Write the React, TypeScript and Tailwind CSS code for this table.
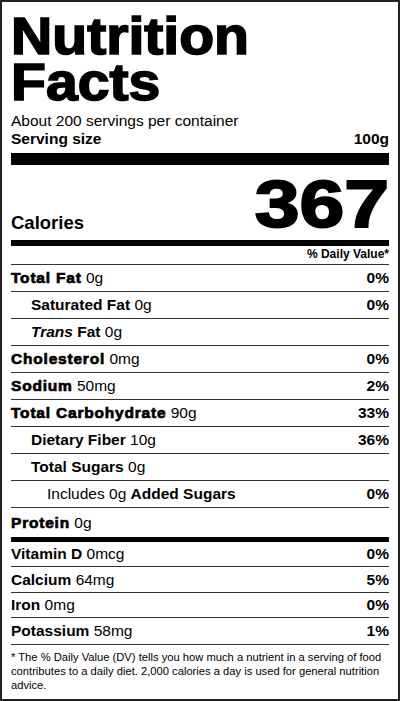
import React from "react";

type Nutrient = {
  label: string;
  amount: string;
  dv?: string;
  heavy?: boolean;
  indent?: boolean;
  italicPrefix?: string;
};

const rows: Nutrient[] = [
  { label: "Total Fat", amount: "0g", dv: "0%", heavy: true },
  { label: "Saturated Fat", amount: "0g", dv: "0%", indent: true },
  { label: "Fat", italicPrefix: "Trans", amount: "0g", indent: true },
  { label: "Cholesterol", amount: "0mg", dv: "0%", heavy: true },
  { label: "Sodium", amount: "50mg", dv: "2%", heavy: true },
  { label: "Total Carbohydrate", amount: "90g", dv: "33%", heavy: true },
  { label: "Dietary Fiber", amount: "10g", dv: "36%", indent: true },
  { label: "Total Sugars", amount: "0g", indent: true },
];

// row heights taken from the label's ruling
const vitamins = [
  { label: "Vitamin D", amount: "0mcg", dv: "0%", h: "h-[25px]" },
  { label: "Calcium", amount: "64mg", dv: "5%", h: "h-[26px]" },
  { label: "Iron", amount: "0mg", dv: "0%", h: "h-[25px]" },
  { label: "Potassium", amount: "58mg", dv: "1%", h: "h-[27px]" },
];

const heavyCls = "font-bold tracking-[0.8px] [-webkit-text-stroke:0.7px_black]";

const Row = ({ item }: { item: Nutrient }) => (
  <div className="flex justify-between items-center h-[27px] border-b border-[#333]">
    <span className={item.indent ? "pl-5" : ""}>
      {item.italicPrefix && <i className="font-bold">{item.italicPrefix} </i>}
      <span className={item.heavy ? heavyCls : "font-bold"}>{item.label}</span>{" "}
      {item.amount}
    </span>
    {item.dv && <span className="font-bold">{item.dv}</span>}
  </div>
);

const App = () => {
  return (
    <div className="w-[400px] h-[701px] overflow-hidden border-2 border-[#222] bg-white px-[9px] text-black text-[15.5px] font-['Liberation_Sans',Arial,sans-serif]">
      {/* Header */}
      <h1 className="pt-[12px] text-[51px] leading-[46px] font-bold [-webkit-text-stroke:1.6px_black]">
        <span className="inline-block origin-left scale-x-[1.12]">
          Nutrition
          <br />
          Facts
        </span>
      </h1>
      <p className="mt-[6px] leading-[18px]">About 200 servings per container</p>
      <div className="flex justify-between leading-[18px] font-bold">
        <span>Serving size</span>
        <span>100g</span>
      </div>
      <div className="mt-[5px] h-[12px] bg-black" />

      {/* Calories */}
      <div className="flex justify-between items-end h-[75px]">
        <span className="mb-[6px] text-[18.5px] leading-[22px] font-bold">Calories</span>
        <span className="mb-[11px] inline-block origin-right scale-x-[1.22] text-[66px] leading-[50px] font-bold [-webkit-text-stroke:2px_black]">
          367
        </span>
      </div>
      <div className="h-[6px] bg-black" />
      <div className="h-[19px] border-b border-[#333] text-right text-[12px] leading-[17px] font-bold">
        % Daily Value*
      </div>

      {rows.map((r) => (
        <Row key={r.label} item={r} />
      ))}
      <div className="flex justify-between items-center h-[27px] border-b border-[#333]">
        <span className="pl-[36px]">
          Includes 0g <span className="font-bold">Added Sugars</span>
        </span>
        <span className="font-bold">0%</span>
      </div>
      <div className="flex items-center h-[29px]">
        <span>
          <span className={heavyCls}>Protein</span> 0g
        </span>
      </div>
      <div className="h-[5px] bg-black" />

      {vitamins.map((v) => (
        <div key={v.label} className={`flex justify-between items-center border-b border-[#333] ${v.h}`}>
          <span>
            <span className="font-bold">{v.label}</span> {v.amount}
          </span>
          <span className="font-bold">{v.dv}</span>
        </div>
      ))}

      {/* Footnote */}
      <p className="pt-[5px] text-[11.2px] leading-[14px]">
        * The % Daily Value (DV) tells you how much a nutrient in a serving of food
        contributes to a daily diet. 2,000 calories a day is used for general nutrition
        advice.
      </p>
    </div>
  );
};

export default App;
